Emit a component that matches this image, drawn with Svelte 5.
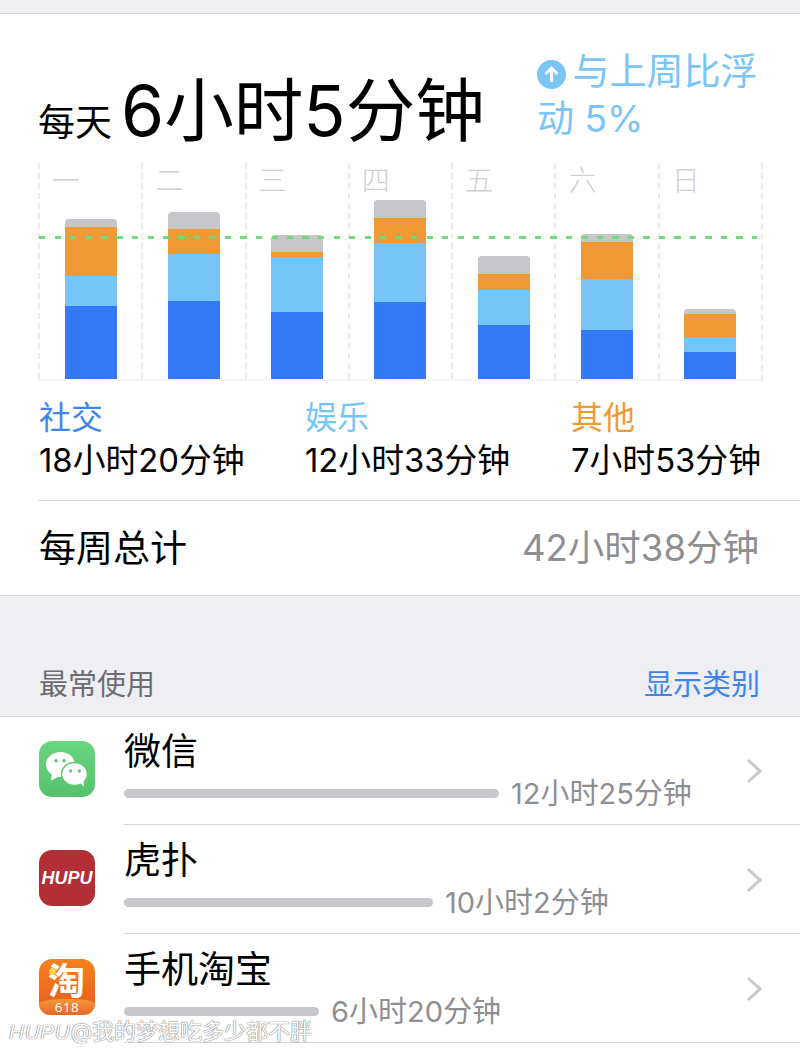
<script lang="ts">
  const days = [
    { label: "一", gray: 8, orange: 49, light: 30.5, blue: 73 },
    { label: "二", gray: 16.5, orange: 25.5, light: 47, blue: 78 },
    { label: "三", gray: 16.7, orange: 5.6, light: 54.7, blue: 67 },
    { label: "四", gray: 18.3, orange: 24.4, light: 59.6, blue: 76.7 },
    { label: "五", gray: 18, orange: 16.6, light: 34.7, blue: 54 },
    { label: "六", gray: 8, orange: 37.3, light: 50.4, blue: 49.3 },
    { label: "日", gray: 5, orange: 23.3, light: 14.7, blue: 27 }
  ];

  const legend = [
    { name: "社交", time: "18小时20分钟", cls: "blue" },
    { name: "娱乐", time: "12小时33分钟", cls: "light" },
    { name: "其他", time: "7小时53分钟", cls: "orange" }
  ];

  const apps = [
    { name: "微信", time: "12小时25分钟", bar: 375, icon: "wechat" },
    { name: "虎扑", time: "10小时2分钟", bar: 309, icon: "hupu" },
    { name: "手机淘宝", time: "6小时20分钟", bar: 195, icon: "taobao" }
  ];
</script>

<div class="page">
  <div class="top-strip"></div>

  <section class="card">
    <div class="summary">
      <h1 class="daily"><span class="daily-label">每天</span> <span class="daily-value">6小时5分钟</span></h1>
      <div class="delta">
        <svg class="delta-icon" viewBox="0 0 29 29" aria-hidden="true">
          <circle cx="14.5" cy="14.5" r="14.5" fill="#7ac5f7" />
          <path d="M14.5 22V8.500M8.500 14l6-6 6 6" fill="none" stroke="#fff" stroke-width="3" />
        </svg>
        与上周比浮动 5%
      </div>
    </div>

    <div class="chart">
      {#each days as day}
        <div class="col">
          <span class="day">{day.label}</span>
          <div class="bar">
            <i class="gray" style={`height:${day.gray}px`}></i>
            <i class="orange" style={`height:${day.orange}px`}></i>
            <i class="light" style={`height:${day.light}px`}></i>
            <i class="blue" style={`height:${day.blue}px`}></i>
          </div>
        </div>
      {/each}
      <div class="average"></div>
    </div>

    <div class="legend">
      {#each legend as item}
        <div class="legend-item">
          <div class={`legend-name ${item.cls}-text`}>{item.name}</div>
          <div class="legend-time">{item.time}</div>
        </div>
      {/each}
    </div>

    <div class="total">
      <span>每周总计</span>
      <span class="total-value">42小时38分钟</span>
    </div>
  </section>

  <div class="list-head">
    <span>最常使用</span>
    <span class="link">显示类别</span>
  </div>

  <section class="list">
    {#each apps as app}
      <div class="row">
        <div class={`app-icon ${app.icon}`}>
          {#if app.icon === "wechat"}
            <svg viewBox="0 0 56 56" width="56" height="56" aria-hidden="true">
              <ellipse cx="21.500" cy="23.500" rx="14.500" ry="12.500" fill="#fff" />
              <path d="M13 32l-1 7.500 8-4z" fill="#fff" />
              <ellipse cx="35.500" cy="33" rx="13" ry="11.500" fill="#fff" stroke="#60c974" stroke-width="1.500" />
              <path d="M41 41.500l4 4.500-.5-7z" fill="#fff" />
              <circle cx="17" cy="19.700" r="1.800" fill="#5fc876" />
              <circle cx="25" cy="19.700" r="1.800" fill="#5fc876" />
              <circle cx="31.700" cy="30" r="1.700" fill="#5fc876" />
              <circle cx="40.300" cy="30" r="1.700" fill="#5fc876" />
            </svg>
          {:else if app.icon === "hupu"}
            <span class="hupu-mark">HUPU</span>
          {:else}
            <span class="tao-mark">淘</span>
            <span class="tao-dot"></span>
            <span class="tao-618">618</span>
          {/if}
        </div>
        <div class="row-body">
          <div class="app-name">{app.name}</div>
          <div class="usage">
            <div class="usage-bar" style={`width:${app.bar}px`}></div>
            <span class="usage-time">{app.time}</span>
          </div>
        </div>
        <svg class="chevron" viewBox="0 0 16 26" width="16" height="26" aria-hidden="true">
          <path d="M2 2l12 11L2 24" fill="none" stroke="#c7c7cc" stroke-width="3" />
        </svg>
      </div>
    {/each}
  </section>

  <div class="watermark"><em>HUPU</em> @我的梦想吃多少都不胖</div>
</div>

<style>
  :global(body) {
    margin: 0;
    background: #eeeef3;
  }

  .page {
    position: relative;
    width: 800px;
    height: 1049px;
    overflow: hidden;
    background: #eeeef3;
    color: #000;
    font-family: "Inter", "Noto Sans CJK SC", sans-serif;
  }

  .top-strip {
    height: 13px;
    border-bottom: 1px solid #d6d6d9;
  }

  .card {
    height: 581px;
    background: #fff;
    border-bottom: 1px solid #d6d6d9;
    padding-left: 38px;
  }

  .summary {
    display: flex;
    justify-content: space-between;
    height: 149px;
    padding-right: 40px;
  }

  .daily {
    margin: 41px 0 0;
    font-weight: 400;
    white-space: nowrap;
    height: 100px;
  }

  .daily-label {
    font-size: 37px;
  }

  .daily-value {
    font-size: 69.600px;
  }

  .delta {
    width: 223px;
    margin-top: 34px;
    font-size: 37px;
    line-height: 47px;
    color: #7ac5f7;
  }

  .delta-icon {
    width: 29px;
    height: 29px;
    margin-right: -4px;
    vertical-align: -4px;
  }

  .chart {
    position: relative;
    display: flex;
    width: 723px;
    height: 216px;
    border-bottom: 2px solid #f4f4f6;
    border-right: 2px dashed #ebebee;
  }

  .col {
    position: relative;
    flex: 1;
    border-left: 2px dashed #ebebee;
    display: flex;
    flex-direction: column;
    align-items: center;
    justify-content: flex-end;
  }

  .day {
    position: absolute;
    top: 0;
    left: 12px;
    font-size: 28px;
    line-height: 37px;
    font-weight: 300;
    color: #cfcfd4;
  }

  .bar {
    width: 52px;
    display: flex;
    flex-direction: column;
    border-radius: 4px 4px 0 0;
    overflow: hidden;
  }

  .bar i {
    display: block;
  }

  .gray { background: #c6c6cb; }
  .orange { background: #ef9a35; }
  .light { background: #77c5f6; }
  .blue { background: #3478f6; }

  .blue-text { color: #3f86ec; }
  .light-text { color: #77c5f6; }
  .orange-text { color: #ef9a35; }

  .average {
    position: absolute;
    left: 1px;
    top: 73px;
    width: 718px;
    height: 3px;
    background: repeating-linear-gradient(90deg, #72d97c 0 6px, transparent 6px 15.5px);
  }

  .legend {
    display: grid;
    grid-template-columns: 266px 266px 1fr;
    padding: 16px 0 0 1px;
    height: 103px;
    border-bottom: 1px solid #dcdcdf;
  }

  .legend-item {
    font-size: 32px;
    line-height: 42px;
    white-space: nowrap;
  }

  .legend-time {
    font-size: 32.800px;
  }

  .total {
    display: flex;
    justify-content: space-between;
    align-items: center;
    height: 89px;
    padding: 0 41px 4px 1px;
    font-size: 37px;
  }

  .total-value {
    font-size: 36.500px;
    color: #8e8e93;
  }

  .list-head {
    position: relative;
    z-index: 1;
    display: flex;
    justify-content: space-between;
    align-items: flex-end;
    height: 109px;
    padding: 0 40px 11px 39px;
    font-size: 29px;
    line-height: 40px;
    color: #6d6d72;
    border-bottom: 1px solid #d6d6d9;
  }

  .link {
    color: #3f86ec;
  }

  .list {
    background: #fff;
    height: 340px;
    margin-top: -1px;
  }

  .row {
    display: flex;
    height: 109px;
    padding-left: 39px;
  }

  .app-icon {
    position: relative;
    flex: none;
    width: 56px;
    height: 56px;
    margin-top: 25px;
    border-radius: 13px;
  }

  .wechat {
    overflow: hidden;
    background: linear-gradient(#69d77f, #58c06c);
  }

  .hupu {
    background: #b22f36;
    display: flex;
    align-items: center;
    justify-content: center;
  }

  .hupu-mark {
    color: #fff;
    font: italic 700 18px "Liberation Sans", sans-serif;
  }

  .taobao {
    background: linear-gradient(#f5821f, #e8591f);
    color: #fff;
  }

  .tao-dot {
    position: absolute;
    left: 10px;
    top: 9px;
    width: 7px;
    height: 7px;
    border-radius: 50%;
    background: #ffd24a;
  }

  .tao-mark {
    position: absolute;
    left: 9px;
    top: 2px;
    font: 700 37px/37px "Noto Sans CJK SC", sans-serif;
  }

  .tao-618 {
    position: absolute;
    left: 0;
    right: 0;
    bottom: 0;
    height: 16px;
    border-radius: 50% 50% 13px 13px / 6px 6px 13px 13px;
    background: linear-gradient(#f39a3a, #e8652a);
    text-align: center;
    font: 400 13.500px/17px "Open Sans", sans-serif;
    letter-spacing: 0.5px;
  }

  .row-body {
    flex: 1;
    margin-left: 29px;
    border-bottom: 1px solid #d6d6d9;
    min-width: 0;
  }

  .app-name {
    margin-top: 11px;
    font-size: 37px;
    line-height: 50px;
    white-space: nowrap;
  }

  .usage {
    display: flex;
    align-items: center;
    gap: 12px;
    margin-top: 12px;
    height: 9px;
  }

  .usage-bar {
    flex: none;
    height: 9px;
    border-radius: 5px;
    background: #c7c7cc;
  }

  .usage-time {
    margin-top: -6px;
    font-size: 29px;
    color: #8e8e93;
    white-space: nowrap;
  }

  .chevron {
    position: absolute;
    right: 38px;
    margin-top: 42px;
  }

  .watermark {
    position: absolute;
    left: 9px;
    bottom: 5px;
    font-size: 22px;
    line-height: 24px;
    color: #fff;
    white-space: nowrap;
    text-shadow: 0 0 1px #666, 0 0 1px #666;
  }

  .watermark em {
    margin-right: -6px;
    font-family: "Liberation Sans", sans-serif;
    font-size: 21px;
    letter-spacing: 0.5px;
  }
</style>
